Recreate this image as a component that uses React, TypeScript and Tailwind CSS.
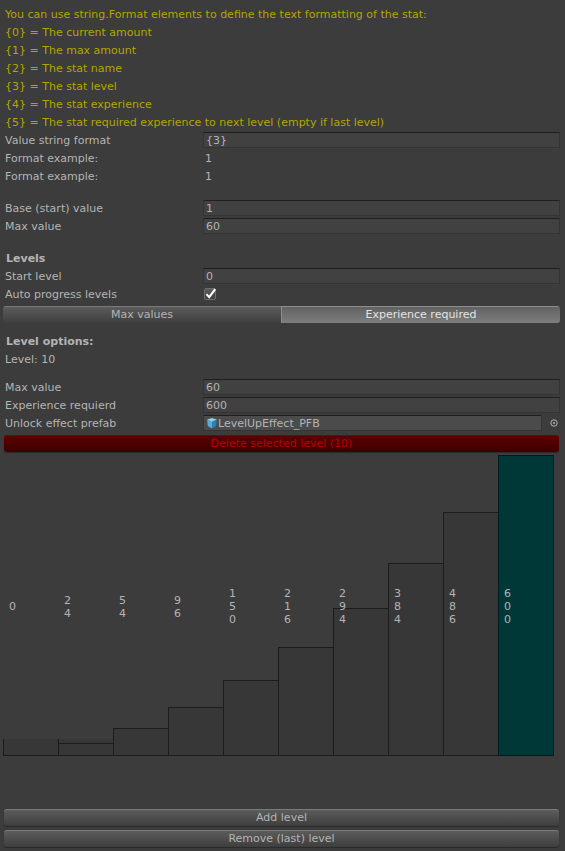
import { useState } from "react";
import type { ReactNode } from "react";

const hints = [
  "You can use string.Format elements to define the text formatting of the stat:",
  "{0} = The current amount",
  "{1} = The max amount",
  "{2} = The stat name",
  "{3} = The stat level",
  "{4} = The stat experience",
  "{5} = The stat required experience to next level (empty if last level)",
];

const experience = [0, 24, 54, 96, 150, 216, 294, 384, 486, 600];
const maxExperience = 600;
const chartHeight = 300;

function Row({ label, htmlFor, children }: { label: string; htmlFor?: string; children?: ReactNode }) {
  return (
    <div className="flex h-4 items-start">
      {htmlFor ? (
        <label htmlFor={htmlFor} className="w-[200px] shrink-0 pl-0.5">
          {label}
        </label>
      ) : (
        <span className="w-[200px] shrink-0 pl-0.5">{label}</span>
      )}
      {children}
    </div>
  );
}

function Field({ id, label, value }: { id: string; label: string; value: string }) {
  return (
    <Row label={label} htmlFor={id}>
      <input
        id={id}
        type="text"
        defaultValue={value}
        className="h-4 min-w-0 flex-1 border border-[#343434] border-t-[#1f1f1f] bg-[#414141] px-0.5 pt-px leading-[13px] outline-none"
      />
    </Row>
  );
}

function WideButton({ children }: { children: ReactNode }) {
  return (
    <button
      type="button"
      className="mx-px flex h-[17px] items-center justify-center rounded-[3px] border-t border-[#7a7a7a] bg-linear-to-b from-[#5c5c5c] to-[#3e3e3e] leading-4 shadow-[0_1px_1px_#2a2a2a]"
    >
      {children}
    </button>
  );
}

function CubeIcon() {
  return (
    <svg viewBox="0 0 12 12" className="size-3 shrink-0" aria-hidden="true">
      <path d="M6 1 10.8 2.6 6 5 1.2 2.6Z" fill="#8fd0ee" />
      <path d="M1.2 2.6 6 5V11.4L1.8 9Z" fill="#58addc" />
      <path d="M10.8 2.6 6 5V11.4L10.2 9Z" fill="#2f7fae" />
    </svg>
  );
}

export default function App() {
  const [tab, setTab] = useState(1);
  const tabs = ["Max values", "Experience required"];

  return (
    <main className="min-h-screen bg-[#3c3c3c] pt-1.5 pr-[5px] pb-1 pl-[3px] font-['DejaVu_Sans',Verdana,sans-serif] text-[11px] leading-[17px] text-[#b4b4b4]">
      <div className="flex flex-col gap-0.5 whitespace-nowrap">
        {hints.map((hint) => (
          <p key={hint} className="h-4 pl-0.5 text-[#b3a600]">
            {hint}
          </p>
        ))}
        <Field id="format" label="Value string format" value="{3}" />
        <Row label="Format example:">
          <span className="pl-0.5">1</span>
        </Row>
        <Row label="Format example:">
          <span className="pl-0.5">1</span>
        </Row>
      </div>

      <div className="mt-4 flex flex-col gap-0.5">
        <Field id="base" label="Base (start) value" value="1" />
        <Field id="max" label="Max value" value="60" />
      </div>

      <div className="mt-4 flex flex-col gap-0.5">
        <h2 className="h-4 pl-[3px] font-bold">Levels</h2>
        <Field id="start" label="Start level" value="0" />
        <Row label="Auto progress levels" htmlFor="auto">
          <span className="mt-0.5 ml-px grid size-3">
            <input
              id="auto"
              type="checkbox"
              defaultChecked
              className="peer col-start-1 row-start-1 size-3 appearance-none rounded-xs border border-[#6c6c6c] bg-linear-to-b from-[#5a5a5a] to-[#404040]"
            />
            <svg
              viewBox="0 0 12 12"
              className="pointer-events-none invisible col-start-1 row-start-1 size-3 overflow-visible peer-checked:visible"
              aria-hidden="true"
            >
              <path d="M2.5 6.2 5.2 9.2 11.2 1.2" fill="none" stroke="#fff" strokeWidth="2" />
            </svg>
          </span>
        </Row>
      </div>

      <div className="mt-1 flex h-[17px] overflow-hidden rounded-[3px] leading-4">
        {tabs.map((name, index) => (
          <button
            key={name}
            type="button"
            aria-pressed={tab === index}
            onClick={() => setTab(index)}
            className={
              tab === index
                ? "flex flex-1 items-center justify-center border-t border-l border-[#8e8e8e] bg-linear-to-b from-[#626262] to-[#7e7e7e] text-[#e4e4e4]"
                : "flex flex-1 items-center justify-center border-t border-[#7a7a7a] bg-linear-to-b from-[#5c5c5c] to-[#3e3e3e]"
            }
          >
            {name}
          </button>
        ))}
      </div>

      <div className="mt-2.5 flex flex-col gap-0.5">
        <h2 className="h-4 pl-[3px] font-bold">Level options:</h2>
        <p className="h-4 pl-0.5">Level: 10</p>
      </div>

      <div className="mt-3 flex flex-col gap-0.5">
        <Field id="level-max" label="Max value" value="60" />
        <Field id="level-experience" label="Experience requierd" value="600" />
        <Row label="Unlock effect prefab" htmlFor="prefab">
          <div className="flex h-4 min-w-0 flex-1 items-center border border-[#343434] border-t-[#1f1f1f] bg-[#4b4b4b] pl-0.5">
            <CubeIcon />
            <input
              id="prefab"
              type="text"
              readOnly
              defaultValue="LevelUpEffect_PFB"
              className="h-3.5 min-w-0 flex-1 bg-transparent pt-px leading-[13px] outline-none"
            />
          </div>
          <button type="button" aria-label="Select prefab" className="ml-1.5 flex h-4 w-3 items-center justify-center">
            <svg viewBox="0 0 8 8" className="size-2" aria-hidden="true">
              <circle cx="4" cy="4" r="3.2" fill="none" stroke="#b4b4b4" />
              <circle cx="4" cy="4" r="1" fill="#b4b4b4" />
            </svg>
          </button>
        </Row>
      </div>

      <button
        type="button"
        className="mx-px mt-1 flex h-[17px] w-[calc(100%-2px)] items-center justify-center rounded-[3px] border-t border-[#7c0000] bg-linear-to-b from-[#5e0000] to-[#3c0000] leading-4 text-[#b80000] shadow-[0_1px_1px_#2a2a2a]"
      >
        Delete selected level (10)
      </button>

      <div className="mt-[3px] mr-[7px] grid grid-cols-10">
        {experience.map((value) => {
          const height = Math.round((value / maxExperience) * chartHeight) + 1;
          return (
            <div key={value} className="grid h-[301px]">
              {height < 17 && (
                <div className="col-start-1 row-start-1 -mr-px h-[17px] self-end border-x border-b border-[#1c1c1c] bg-[#373737]" />
              )}
              {height > 1 && (
                <div
                  className={
                    value === maxExperience
                      ? "col-start-1 row-start-1 -mr-px self-end border border-[#001c1c] bg-[#003838]"
                      : "col-start-1 row-start-1 -mr-px self-end border border-[#1c1c1c] bg-[#373737]"
                  }
                  style={{ height }}
                />
              )}
              <span className="col-start-1 row-start-1 ml-1.5 w-2 self-center pt-0.5 leading-[13px] break-all">
                {value}
              </span>
            </div>
          );
        })}
      </div>

      <div className="mt-[53px] flex flex-col gap-1">
        <WideButton>Add level</WideButton>
        <WideButton>Remove (last) level</WideButton>
      </div>
    </main>
  );
}
